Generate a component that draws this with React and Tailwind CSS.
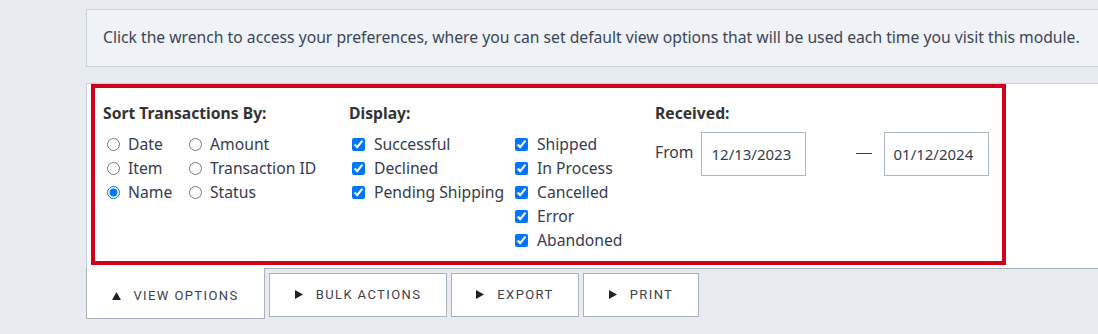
import React from "react";

const font = { fontFamily: "'Noto Sans', Lato, sans-serif" };
const tabFont = { fontFamily: "Roboto, 'Liberation Sans', sans-serif" };

function Radio({ label, checked }) {
  return (
    <label className="flex items-center h-[24px] text-[15.7px] leading-[20px] text-[#363b4e]">
      <input type="radio" name="sort" defaultChecked={checked} className="m-0 ml-[4px] w-[13px] h-[13px]" />
      <span className="ml-[8px]">{label}</span>
    </label>
  );
}

function Check({ label }) {
  return (
    <label className="flex items-center h-[24px] text-[15.7px] leading-[20px] text-[#363b4e]">
      <input type="checkbox" defaultChecked className="m-0 ml-[3px] w-[13px] h-[13px]" />
      <span className="ml-[9px]">{label}</span>
    </label>
  );
}

function Arrow({ up }) {
  return up ? (
    <svg width="9" height="8" viewBox="0 0 9 8" className="shrink-0">
      <path d="M4.5 0 L9 8 L0 8 Z" fill="#222" />
    </svg>
  ) : (
    <svg width="8" height="9" viewBox="0 0 8 9" className="shrink-0">
      <path d="M0 0 L8 4.5 L0 9 Z" fill="#222" />
    </svg>
  );
}

function Tab({ label, active, width }) {
  if (active) {
    return (
      <div
        className={`${width} h-[51px] -mt-[1px] pt-[5px] bg-white border-x border-b border-[#a7b2be] flex items-center justify-center gap-[12px] text-[13px] tracking-[1.4px] text-[#3b4250]`}
        style={tabFont}
      >
        <Arrow up />
        <span>{label}</span>
      </div>
    );
  }
  return (
    <div
      className={`${width} h-[44px] mt-[4px] pb-[1px] bg-white border border-[#a7b2be] flex items-center justify-center gap-[13px] text-[13px] tracking-[1.4px] text-[#3b4250]`}
      style={tabFont}
    >
      <Arrow />
      <span>{label}</span>
    </div>
  );
}

const heading = "text-[15.7px] leading-[20px] font-bold text-[#333]";

export default function App() {
  return (
    <div className="w-[1098px] h-[334px] overflow-hidden bg-[#e8ecf0]" style={font}>
      <div className="pl-[86px] pt-[9px] w-[1160px]">
        {/* info */}
        <div className="h-[58px] bg-[#eff2f7] border border-[#c8d2dd] flex items-center pl-[16px] text-[15.7px] text-[#3b4656]">
          Click the wrench to access your preferences, where you can set default view options that will be used each time you visit this module.
        </div>

        {/* panel */}
        <div className="mt-[16px] bg-white border border-[#c8d2dd] border-b-[#a7b2be] pl-[4px] pb-[3px]">
          <div className="w-[915px] h-[181px] border-4 border-[#d0021b] pl-[8px] pt-[15px] flex">
            {/* sort */}
            <div className="w-[246px]">
              <div className={heading}>Sort Transactions By:</div>
              <div className="mt-[9px] grid grid-cols-[82px_1fr]">
                <Radio label="Date" />
                <Radio label="Amount" />
                <Radio label="Item" />
                <Radio label="Transaction ID" />
                <Radio label="Name" checked />
                <Radio label="Status" />
              </div>
            </div>
            {/* display */}
            <div className="w-[306px]">
              <div className={heading}>Display:</div>
              <div className="mt-[9px] flex">
                <div className="w-[163px]">
                  <Check label="Successful" />
                  <Check label="Declined" />
                  <Check label="Pending Shipping" />
                </div>
                <div>
                  <Check label="Shipped" />
                  <Check label="In Process" />
                  <Check label="Cancelled" />
                  <Check label="Error" />
                  <Check label="Abandoned" />
                </div>
              </div>
            </div>
            {/* received */}
            <div>
              <div className={heading}>Received:</div>
              <div className="mt-[9px] flex items-center text-[15.7px] leading-[20px] text-[#363b4e]">
                <span className="-mt-[4px]">From</span>
                <div className="ml-[8px] w-[105px] h-[44px] border border-[#a9b8c8] flex items-center pl-[9px] text-[15px]">12/13/2023</div>
                <span className="ml-[50px] w-[16px] h-[1px] bg-[#363b4e] -mt-[2px]"></span>
                <div className="ml-[12px] w-[105px] h-[44px] border border-[#a9b8c8] flex items-center pl-[8px] text-[15px]">01/12/2024</div>
              </div>
            </div>
          </div>
        </div>

        {/* tabs */}
        <div className="flex gap-[4px] items-start">
          <Tab label="VIEW OPTIONS" active width="w-[179px]" />
          <Tab label="BULK ACTIONS" width="w-[178px]" />
          <Tab label="EXPORT" width="w-[128px]" />
          <Tab label="PRINT" width="w-[116px]" />
        </div>
      </div>
    </div>
  );
}
